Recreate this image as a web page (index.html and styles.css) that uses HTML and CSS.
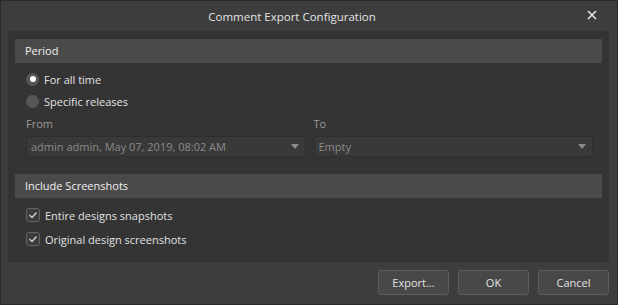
FILE: index.html
```html
<!DOCTYPE html>
<html lang="en">
<head>
  <meta charset="UTF-8">
  <title>Comment Export Configuration</title>
  <link rel="stylesheet" href="styles.css">
</head>
<body>
  <div class="dialog">
    <div class="titlebar">
      <span class="title">Comment Export Configuration</span>
      <span class="close">
        <svg width="10" height="10" viewBox="0 0 10 10"><path d="M1 1 L9 9 M9 1 L1 9" stroke="#e6e6e6" stroke-width="1.6"/></svg>
      </span>
    </div>

    <div class="panel">
      <div class="section-head">Period</div>
      <div class="section-body">
        <label class="row"><span class="radio checked"></span>For all time</label>
        <label class="row"><span class="radio"></span>Specific releases</label>
        <div class="fields">
          <div class="field">
            <div class="field-label">From</div>
            <div class="dropdown">admin admin, May 07, 2019, 08:02 AM<span class="arrow"></span></div>
          </div>
          <div class="field">
            <div class="field-label">To</div>
            <div class="dropdown">Empty<span class="arrow"></span></div>
          </div>
        </div>
      </div>

      <div class="section-head second">Include Screenshots</div>
      <div class="section-body checks">
        <label class="row check-row"><span class="check"><svg width="10" height="10" viewBox="0 0 10 10"><path d="M1.5 5 L4 7.5 L8.5 2.5" fill="none" stroke="#d0d0d0" stroke-width="1.4"/></svg></span>Entire designs snapshots</label>
        <label class="row check-row"><span class="check"><svg width="10" height="10" viewBox="0 0 10 10"><path d="M1.5 5 L4 7.5 L8.5 2.5" fill="none" stroke="#d0d0d0" stroke-width="1.4"/></svg></span>Original design screenshots</label>
      </div>
    </div>

    <div class="buttons">
      <button>Export...</button>
      <button>OK</button>
      <button>Cancel</button>
    </div>
  </div>
</body>
</html>
```

FILE: styles.css
```css
body {
  margin: 0;
  font-family: "Open Sans", "Noto Sans", sans-serif;
  font-size: 11px;
  color: #e2e2e2;
  background: #2b2b2b;
}
.dialog {
  box-sizing: border-box;
  width: 618px;
  height: 305px;
  border: 1px solid #2a2a2a;
  background: #3d3d3d;
}
.titlebar {
  height: 30px;
  display: flex;
  align-items: center;
  justify-content: center;
  position: relative;
}
.title {
  font-size: 11.5px;
  color: #e4e4e4;
  margin-left: -34px;
  margin-top: 1px;
}
.close {
  position: absolute;
  right: 20px;
  top: 7px;
}
.panel {
  box-sizing: border-box;
  height: 231px;
  margin: 0 8px 0 7px;
  padding: 8px 7px 0 7px;
  background: #343434;
}
.section-head {
  height: 24px;
  line-height: 24px;
  padding-left: 10px;
  background: #4a4a4a;
  color: #f0f0f0;
}
.section-head.second {
  margin-top: 17px;
}
.section-body {
  padding: 5px 9px 0 11px;
}
.row {
  display: flex;
  align-items: center;
  height: 22px;
}
.radio {
  box-sizing: border-box;
  width: 13px;
  height: 13px;
  border-radius: 50%;
  background: #575757;
  margin-right: 5px;
  position: relative;
}
.radio.checked::after {
  content: "";
  position: absolute;
  left: 3.5px;
  top: 3.5px;
  width: 6px;
  height: 6px;
  border-radius: 50%;
  background: #ffffff;
}
.fields {
  display: flex;
  gap: 8px;
  margin-top: 4px;
}
.field {
  flex: 1;
}
.field-label {
  height: 16px;
  line-height: 16px;
  color: #9a9a9a;
  margin-bottom: 4px;
}
.dropdown {
  box-sizing: border-box;
  height: 21px;
  line-height: 19px;
  padding-left: 4px;
  border: 1px solid #2e2e2e;
  border-radius: 2px;
  background: #393939;
  color: #8a8a8a;
  position: relative;
}
.arrow {
  position: absolute;
  right: 6px;
  top: 7px;
  width: 0;
  height: 0;
  border-left: 4px solid transparent;
  border-right: 4px solid transparent;
  border-top: 5px solid #8c8c8c;
}
.checks {
  padding-top: 5px;
}
.check-row {
  height: 24px;
}
.check {
  box-sizing: border-box;
  width: 14px;
  height: 14px;
  border: 1px solid #666;
  border-radius: 3px;
  background: #3b3b3b;
  margin-right: 5px;
  display: flex;
  align-items: center;
  justify-content: center;
}
.buttons {
  display: flex;
  justify-content: flex-end;
  gap: 9px;
  padding: 8px 8px 0 0;
}
button {
  width: 71px;
  height: 25px;
  font-family: inherit;
  font-size: 11px;
  color: #e4e4e4;
  background: #484848;
  border: 1px solid #5c5c5c;
  border-radius: 3px;
}
```
